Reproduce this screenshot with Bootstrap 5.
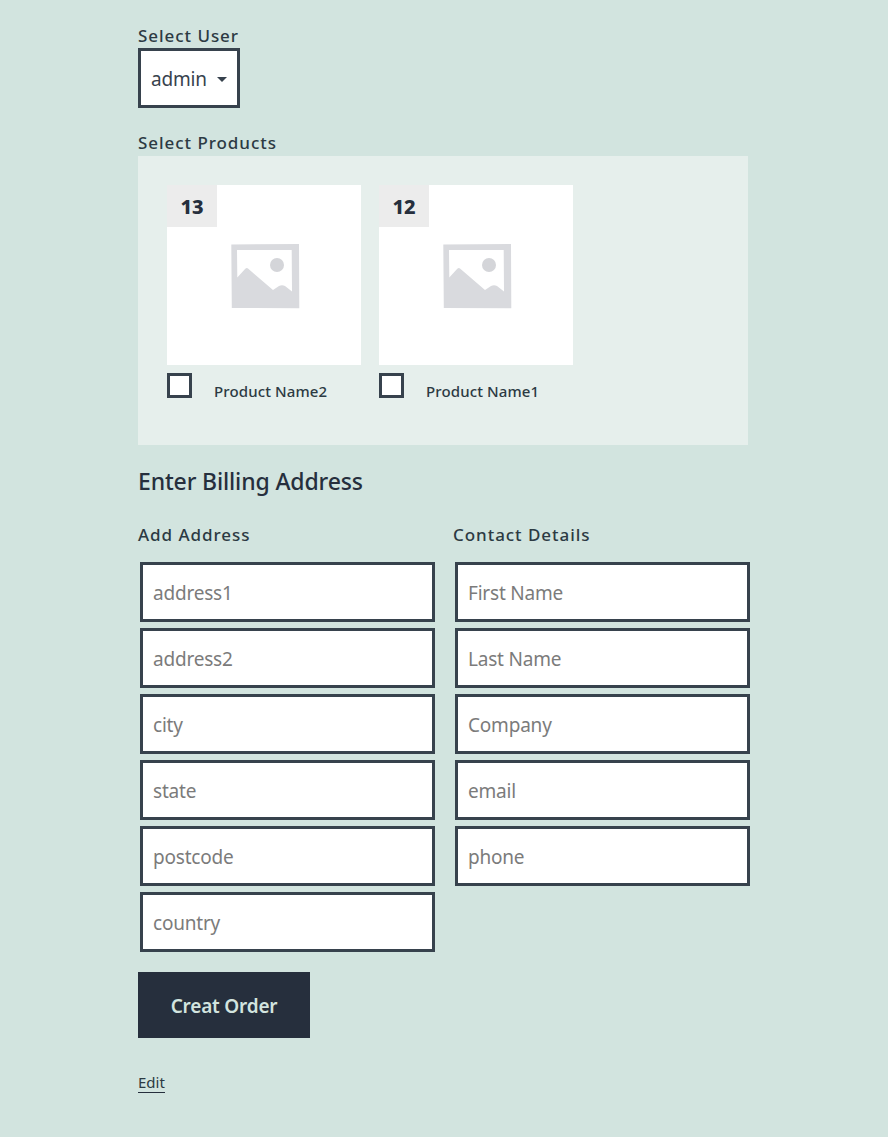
<!DOCTYPE html>
<html lang="en">
<head>
<meta charset="utf-8">
<title>Create Order</title>
<link rel="stylesheet" href="https://cdn.jsdelivr.net/npm/bootstrap@5.3.0/dist/css/bootstrap.min.css">
<style>
body{background:#d2e4df;color:#262f3d;font-family:"Noto Sans","Open Sans","Liberation Sans",sans-serif;}
.page-wrap{width:610px;margin-left:138px;padding-top:25px;height:1137px;overflow:visible;}
.field-label{display:block;font-size:17px;line-height:22px;padding-bottom:1px;font-weight:500;letter-spacing:.95px;color:#2c3a43;margin:0;}
.user-btn{display:flex;align-items:center;width:102px;height:60px;background:#fff;border:3px solid #37424d;border-radius:0;color:#37424d;font-size:19px;letter-spacing:-.2px;padding:3px 0 0 10px;}
.user-btn.dropdown-toggle::after{margin-left:10px;}
.user-btn:hover,.user-btn:active{background:#fff!important;border-color:#37424d!important;color:#37424d!important;}
.products-label{margin-top:25px;line-height:19px;padding-bottom:4px;}
.product-panel{background:#e6efec;height:289px;padding:29px 29px 0;display:flex;gap:18px;}
.product-item{width:194px;}
.product-thumb{position:relative;height:180px;background:#fff;display:flex;align-items:center;justify-content:center;}
.product-id{position:absolute;left:0;top:0;width:50px;height:42px;padding-top:2px;background:#ececec;font-size:20px;font-weight:800;color:#262f3d;display:flex;align-items:center;justify-content:center;}
.product-foot{display:flex;margin-top:8px;}
.product-check{appearance:none;width:25px;height:25px;flex:none;background:#fff;border:3px solid #37424d;margin:0;}
.product-title{margin:8px 0 0 22px;font-size:15px;line-height:20px;font-weight:500;letter-spacing:.12px;color:#2c3a43;}
.billing-title{font-size:23px;line-height:32px;font-weight:500;letter-spacing:-.15px;color:#262f3d;margin:20px 0 0;}
.address-cols{display:flex;margin-top:27px;width:630px;}
.address-col{width:315px;}
.col-heading{margin-bottom:15px;line-height:21px;padding-bottom:2px;}
.addr-input{display:block;width:295px;height:60px;margin:0 2px 6px;background:#fff;border:3px solid #37424d;border-radius:0;padding:2px 10px 0;font-size:19px;letter-spacing:-.2px;color:#37424d;}
.addr-input::placeholder{color:#7b7b7b;opacity:1;}
.addr-input:focus{border-color:#37424d;box-shadow:none;}
.order-btn{display:block;width:172px;height:66px;margin-top:14px;background:#262f3d;border:0;border-radius:0;color:#d2e4df;font-size:19px;letter-spacing:-.2px;font-weight:600;padding:2px 0 0;}
.order-btn:hover,.order-btn:active{background:#262f3d!important;color:#d2e4df!important;}
.edit-link{display:inline-block;margin-top:34px;font-size:15px;line-height:20px;color:#2c3a43;text-decoration:none;border-bottom:1px solid #262f3d;}
</style>
</head>
<body>
<main class="page-wrap">
  <label class="field-label">Select User</label>
  <div class="dropdown">
    <button class="btn user-btn dropdown-toggle" type="button" data-bs-toggle="dropdown" aria-expanded="false">admin</button>
    <ul class="dropdown-menu rounded-0"><li><a class="dropdown-item" href="#">admin</a></li></ul>
  </div>

  <label class="field-label products-label">Select Products</label>
  <div class="product-panel">
    <div class="product-item">
      <div class="product-thumb">
        <span class="product-id">13</span>
        <svg width="72" height="68" viewBox="0 0 72 68" aria-hidden="true"><path fill="#d9dade" fill-rule="evenodd" d="M3.300 3.500 71 3l.3 64.300L3.800 67zM9 9l.3 27.500 8-8.700c1-1 2-1 3 0L45 49l6-4c2-1 4-1 6 0l7 5.500L63.700 9z"/><circle cx="49" cy="24" r="7" fill="#d4d5d9"/></svg>
      </div>
      <div class="product-foot">
        <input class="product-check" type="checkbox" aria-label="Product Name2">
        <p class="product-title">Product Name2</p>
      </div>
    </div>
    <div class="product-item">
      <div class="product-thumb">
        <span class="product-id">12</span>
        <svg width="72" height="68" viewBox="0 0 72 68" aria-hidden="true"><path fill="#d9dade" fill-rule="evenodd" d="M3.300 3.500 71 3l.3 64.300L3.800 67zM9 9l.3 27.500 8-8.700c1-1 2-1 3 0L45 49l6-4c2-1 4-1 6 0l7 5.500L63.700 9z"/><circle cx="49" cy="24" r="7" fill="#d4d5d9"/></svg>
      </div>
      <div class="product-foot">
        <input class="product-check" type="checkbox" aria-label="Product Name1">
        <p class="product-title">Product Name1</p>
      </div>
    </div>
  </div>

  <h2 class="billing-title">Enter Billing Address</h2>
  <form>
    <div class="address-cols">
      <div class="address-col">
        <label class="field-label col-heading">Add Address</label>
        <input class="form-control addr-input" placeholder="address1">
        <input class="form-control addr-input" placeholder="address2">
        <input class="form-control addr-input" placeholder="city">
        <input class="form-control addr-input" placeholder="state">
        <input class="form-control addr-input" placeholder="postcode">
        <input class="form-control addr-input" placeholder="country">
      </div>
      <div class="address-col">
        <label class="field-label col-heading">Contact Details</label>
        <input class="form-control addr-input" placeholder="First Name">
        <input class="form-control addr-input" placeholder="Last Name">
        <input class="form-control addr-input" placeholder="Company">
        <input class="form-control addr-input" placeholder="email">
        <input class="form-control addr-input" placeholder="phone">
      </div>
    </div>
    <button class="btn order-btn" type="button">Creat Order</button>
  </form>
  <a class="edit-link" href="#">Edit</a>
</main>
<script src="https://cdn.jsdelivr.net/npm/bootstrap@5.3.0/dist/js/bootstrap.bundle.min.js"></script>
</body>
</html>
